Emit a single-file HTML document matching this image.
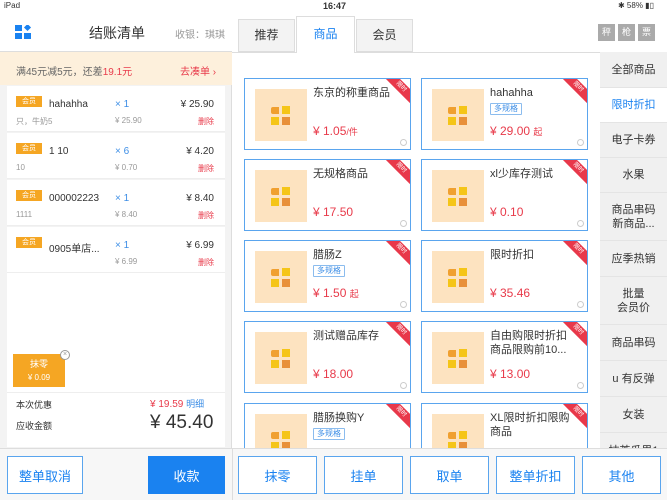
<!DOCTYPE html><html><head><meta charset="utf-8"><style>
*{margin:0;padding:0;box-sizing:border-box}
body{width:667px;height:500px;position:relative;overflow:hidden;background:#fff;font-family:"Liberation Sans","Noto Sans CJK SC",sans-serif;color:#333}
.a{position:absolute}
.card{position:absolute;width:167px;height:72px;border:1px solid #5aa5ee;background:#fff;overflow:hidden}
.img{position:absolute;left:10px;top:10px;width:52px;height:52px;background:#fde3c0}
.nm{position:absolute;left:68px;top:7px;font-size:11px;line-height:14px;color:#333;width:80px}
.pr{position:absolute;left:68px;top:45px;font-size:12px;color:#e83a4a}
.pr small{font-size:9px}
.tag{display:inline-block;border:1px solid #8bbcee;color:#3d8ee6;font-size:8px;line-height:10px;padding:0 3px;margin-top:3px;border-radius:1px}
.rib{position:absolute;right:-11px;top:3px;width:40px;height:10px;background:#e8384a;color:#fff;font-size:6px;line-height:10px;text-align:center;transform:rotate(45deg)}
.q{position:absolute;right:3px;bottom:3px;width:7px;height:7px;border:1px solid #ccc;border-radius:50%}
.side{position:absolute;left:600px;width:67px;background:#f0f0f0;border-bottom:1px solid #e4e4e4;font-size:11px;text-align:center;display:flex;align-items:center;justify-content:center;line-height:14px;color:#333}
.it{position:absolute;left:7px;width:218px;height:46px;background:#fff;border-bottom:1px solid #eee}
.vip{position:absolute;left:9px;top:10px;width:26px;height:11px;background:#f5a623;color:#fff;font-size:7px;line-height:11px;text-align:center}
.btn{position:absolute;top:456px;height:38px;border:1px solid #5aa5ee;color:#1a82f0;font-size:13px;display:flex;align-items:center;justify-content:center;background:#fff}
.img::before{content:"";position:absolute;left:16px;top:18px;width:8px;height:7px;background:#f0a030;border-radius:2px 0 0 2px}
.img::after{content:"";position:absolute;left:27px;top:17px;width:8px;height:8px;background:#f5c518;box-shadow:-11px 11px 0 #f5c518,0 11px 0 #e8903a}
</style></head><body>
<div class="a" style="left:4px;top:1px;font-size:8px">iPad</div>
<div class="a" style="left:323px;top:1px;font-size:9px;font-weight:bold">16:47</div>
<div class="a" style="left:618px;top:1px;font-size:8px">✱ 58% ▮▯</div>
<div class="a" style="left:0;top:14px;width:232px;height:486px;background:#f3f3f3;border-right:1px solid #ddd"></div>
<div class="a" style="left:0;top:14px;width:232px;height:38px;background:#fff;border-bottom:1px solid #ddd"></div>
<svg class="a" style="left:15px;top:25px" width="17" height="15"><rect x="0" y="0" width="7" height="6" fill="#1a82f0"/><rect x="0" y="8" width="7" height="6" fill="#1a82f0"/><rect x="9" y="8" width="7" height="6" fill="#1a82f0"/><rect x="10" y="0" width="5" height="5" fill="#1a82f0" transform="rotate(45 12.5 2.5)"/></svg>
<div class="a" style="left:89px;top:23px;font-size:14px">结账清单</div>
<div class="a" style="left:175px;top:26px;font-size:10px;color:#999">收银：琪琪</div>
<div class="a" style="left:0;top:52px;width:232px;height:33px;background:#fdf0dc"></div>
<div class="a" style="left:16px;top:63px;font-size:10px;color:#666">满45元减5元，还差<span style="color:#e83a4a">19.1元</span></div>
<div class="a" style="left:180px;top:63px;font-size:10px;color:#e83a4a">去凑单 ›</div>
<div class="it" style="top:86px"><div class="vip">会员</div><div class="a" style="left:42px;top:13px;font-size:10px">hahahha</div><div class="a" style="left:108px;top:13px;font-size:10px;color:#3d8ee6">× 1</div><div class="a" style="right:11px;top:13px;font-size:10px">¥ 25.90</div><div class="a" style="left:9px;top:30px;font-size:8px;color:#999">只，牛奶5</div><div class="a" style="left:108px;top:30px;font-size:8px;color:#999">¥ 25.90</div><div class="a" style="right:11px;top:30px;font-size:8px;color:#e83a4a">删除</div></div>
<div class="it" style="top:133px"><div class="vip">会员</div><div class="a" style="left:42px;top:13px;font-size:10px">1 10</div><div class="a" style="left:108px;top:13px;font-size:10px;color:#3d8ee6">× 6</div><div class="a" style="right:11px;top:13px;font-size:10px">¥ 4.20</div><div class="a" style="left:9px;top:30px;font-size:8px;color:#999">10</div><div class="a" style="left:108px;top:30px;font-size:8px;color:#999">¥ 0.70</div><div class="a" style="right:11px;top:30px;font-size:8px;color:#e83a4a">删除</div></div>
<div class="it" style="top:180px"><div class="vip">会员</div><div class="a" style="left:42px;top:13px;font-size:10px">000002223</div><div class="a" style="left:108px;top:13px;font-size:10px;color:#3d8ee6">× 1</div><div class="a" style="right:11px;top:13px;font-size:10px">¥ 8.40</div><div class="a" style="left:9px;top:30px;font-size:8px;color:#999">1111</div><div class="a" style="left:108px;top:30px;font-size:8px;color:#999">¥ 8.40</div><div class="a" style="right:11px;top:30px;font-size:8px;color:#e83a4a">删除</div></div>
<div class="it" style="top:227px"><div class="vip">会员</div><div class="a" style="left:42px;top:13px;font-size:10px">0905单店...</div><div class="a" style="left:108px;top:13px;font-size:10px;color:#3d8ee6">× 1</div><div class="a" style="right:11px;top:13px;font-size:10px">¥ 6.99</div><div class="a" style="left:108px;top:30px;font-size:8px;color:#999">¥ 6.99</div><div class="a" style="right:11px;top:30px;font-size:8px;color:#e83a4a">删除</div></div>
<div class="a" style="left:7px;top:273px;width:218px;height:174px;background:#fff"></div>
<div class="a" style="left:13px;top:354px;width:52px;height:33px;background:#f5a623;color:#fff;text-align:center;font-size:9px;line-height:13px;padding-top:4px">抹零<br><span style="font-size:8px">¥ 0.09</span></div>
<div class="a" style="left:60px;top:350px;width:10px;height:10px;border:1px solid #999;border-radius:50%;background:#fff;font-size:7px;line-height:8px;text-align:center;color:#999">×</div>
<div class="a" style="left:7px;top:392px;width:218px;height:1px;background:#eee"></div>
<div class="a" style="left:16px;top:398px;font-size:9px">本次优惠</div>
<div class="a" style="left:150px;top:397px;font-size:10px;color:#e83a4a">¥ 19.59 <span style="color:#3d8ee6;font-size:9px">明细</span></div>
<div class="a" style="left:16px;top:419px;font-size:9px">应收金额</div>
<div class="a" style="left:150px;top:412px;font-size:19px">¥ 45.40</div>
<div class="a" style="left:232px;top:52px;width:368px;height:1px;background:#ddd"></div>
<div class="a" style="left:238px;top:19px;width:57px;height:33px;background:#f3f3f3;border:1px solid #ddd;font-size:12px;text-align:center;line-height:31px">推荐</div>
<div class="a" style="left:296px;top:16px;width:59px;height:37px;background:#fff;border:1px solid #ddd;border-bottom:none;font-size:12px;text-align:center;line-height:34px;color:#1a82f0">商品</div>
<div class="a" style="left:356px;top:19px;width:57px;height:33px;background:#f3f3f3;border:1px solid #ddd;font-size:12px;text-align:center;line-height:31px">会员</div>
<div class="a" style="left:598px;top:24px;width:17px;height:17px;background:#aaa;color:#fff;font-size:9px;text-align:center;line-height:17px">秤</div>
<div class="a" style="left:618px;top:24px;width:17px;height:17px;background:#aaa;color:#fff;font-size:9px;text-align:center;line-height:17px">枪</div>
<div class="a" style="left:638px;top:24px;width:17px;height:17px;background:#aaa;color:#fff;font-size:9px;text-align:center;line-height:17px">票</div>
<div class="card" style="left:244px;top:78px"><div class="img"></div><div class="nm">东京的称重商品</div><div class="pr">¥ 1.05<small>/件</small></div><div class="rib">限时</div><div class="q"></div></div>
<div class="card" style="left:421px;top:78px"><div class="img"></div><div class="nm">hahahha<br><span class="tag">多规格</span></div><div class="pr">¥ 29.00 <small>起</small></div><div class="rib">限时</div><div class="q"></div></div>
<div class="card" style="left:244px;top:159px"><div class="img"></div><div class="nm">无规格商品</div><div class="pr">¥ 17.50</div><div class="rib">限时</div><div class="q"></div></div>
<div class="card" style="left:421px;top:159px"><div class="img"></div><div class="nm">xl少库存测试</div><div class="pr">¥ 0.10</div><div class="rib">限时</div><div class="q"></div></div>
<div class="card" style="left:244px;top:240px"><div class="img"></div><div class="nm">腊肠Z<br><span class="tag">多规格</span></div><div class="pr">¥ 1.50 <small>起</small></div><div class="rib">限时</div><div class="q"></div></div>
<div class="card" style="left:421px;top:240px"><div class="img"></div><div class="nm">限时折扣</div><div class="pr">¥ 35.46</div><div class="rib">限时</div><div class="q"></div></div>
<div class="card" style="left:244px;top:321px"><div class="img"></div><div class="nm">测试赠品库存</div><div class="pr">¥ 18.00</div><div class="rib">限时</div><div class="q"></div></div>
<div class="card" style="left:421px;top:321px"><div class="img"></div><div class="nm">自由购限时折扣商品限购前10...</div><div class="pr">¥ 13.00</div><div class="rib">限时</div><div class="q"></div></div>
<div class="card" style="left:244px;top:403px"><div class="img"></div><div class="nm">腊肠换购Y<br><span class="tag">多规格</span></div><div class="rib">限时</div></div>
<div class="card" style="left:421px;top:403px"><div class="img"></div><div class="nm">XL限时折扣限购商品</div><div class="rib">限时</div></div>
<div class="side" style="top:52px;height:36px">全部商品</div>
<div class="side" style="top:88px;height:35px;background:#fff;color:#1a82f0">限时折扣</div>
<div class="side" style="top:123px;height:35px">电子卡券</div>
<div class="side" style="top:158px;height:35px">水果</div>
<div class="side" style="top:193px;height:48px">商品串码<br>新商品...</div>
<div class="side" style="top:241px;height:36px">应季热销</div>
<div class="side" style="top:277px;height:48px">批量<br>会员价</div>
<div class="side" style="top:325px;height:36px">商品串码</div>
<div class="side" style="top:361px;height:36px">u 有反弹</div>
<div class="side" style="top:397px;height:36px">女装</div>
<div class="side" style="top:433px;height:36px">抹茶瓜果1</div>
<div class="a" style="left:0;top:448px;width:667px;height:52px;background:#f7f7f7;border-top:1px solid #ddd"></div>
<div class="a" style="left:232px;top:448px;width:1px;height:52px;background:#ddd"></div>
<div class="btn" style="left:7px;width:76px">整单取消</div>
<div class="btn" style="left:148px;width:77px;background:#1a82f0;color:#fff;border-color:#1a82f0">收款</div>
<div class="btn" style="left:238px;width:79px">抹零</div>
<div class="btn" style="left:324px;width:79px">挂单</div>
<div class="btn" style="left:410px;width:79px">取单</div>
<div class="btn" style="left:496px;width:79px">整单折扣</div>
<div class="btn" style="left:582px;width:79px">其他</div>
</body></html>
